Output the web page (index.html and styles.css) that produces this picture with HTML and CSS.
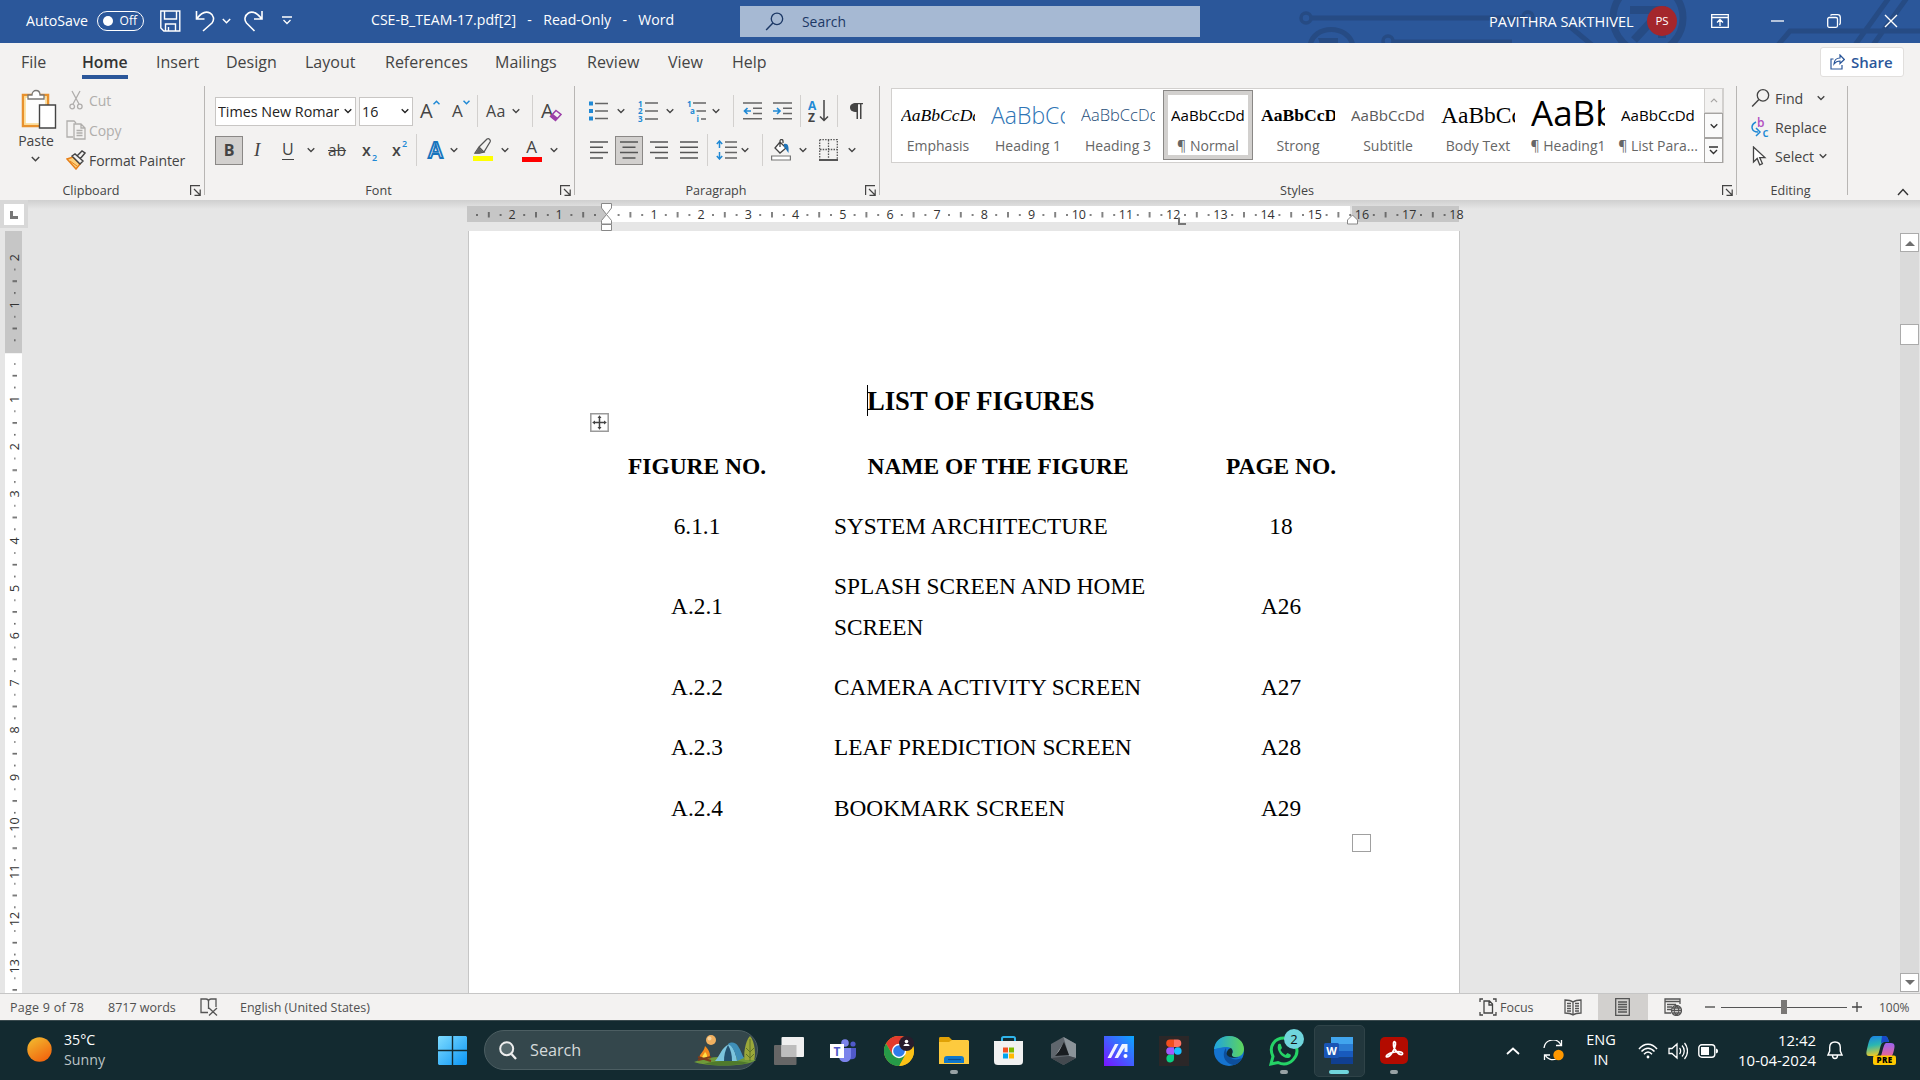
FILE: index.html
```html
<!DOCTYPE html>
<html lang="en">
<head>
<meta charset="utf-8">
<title>CSE-B_TEAM-17.pdf[2] - Read-Only - Word</title>
<link rel="stylesheet" href="styles.css">
</head>
<body>
<svg class="defs" width="0" height="0" aria-hidden="true">
  <symbol id="chev" viewBox="0 0 9 6"><path d="M.8 1l3.700 3.700L8.200 1" fill="none" stroke="currentColor" stroke-width="1.500"/></symbol>
  <symbol id="launch" viewBox="0 0 11 11"><path d="M.6 10V.6H10M4 4l6 6M10.200 4.500v5.800H4.500" fill="none" stroke="currentColor" stroke-width="1.200"/></symbol>
  <symbol id="lens" viewBox="0 0 20 20"><circle cx="12.600" cy="7.200" r="6" fill="none" stroke="currentColor" stroke-width="1.400"/><path d="M8.300 11.600L1.200 19" stroke="currentColor" stroke-width="1.500"/></symbol>
</svg>
<div class="window">

<header class="titlebar">
  <svg class="circuit" width="640" height="43" viewBox="0 0 640 43" fill="none" stroke="#264b84" stroke-width="5">
    <circle cx="26" cy="18" r="5" stroke-width="3.500"/><path d="M32 18h213"/><circle cx="248" cy="17" r="5" stroke-width="3.500"/>
    <path d="M30 46c3-22 39-22 43 0" stroke-width="5"/><path d="M38 38h20v6H40z" fill="#264b84" stroke="none"/>
    <circle cx="108" cy="41" r="5" stroke-width="3.500"/><path d="M114 42h118M288 25l24 20"/>
    <circle cx="368" cy="18" r="35" stroke-width="7"/><path d="M350 10h32v28M382 10l-28 30" stroke-width="8"/>
    <path d="M498 45l12-14h130M575 45l36-50M593 45l36-50"/>
  </svg>
  <span class="t14">AutoSave</span>
  <span class="toggle"><i></i><b>Off</b></span>
  <svg width="21" height="22" viewBox="0 0 21 22" fill="none" stroke="#fff" stroke-width="1.400"><path d="M.8 1h19v20h-16l-3-3zM4.500 1v8h12V1M5.500 21v-7h10v7M8.500 21v-4"/></svg>
  <svg width="20" height="22" viewBox="0 0 20 22" fill="none" stroke="#fff" stroke-width="1.600"><path d="M1.500 1v8h8M2 8.500C6 3 11 1 15 3c4 2 4.500 7 2 10l-9 8"/></svg>
  <svg width="9" height="6"><use href="#chev"/></svg>
  <svg width="20" height="22" viewBox="0 0 20 22" fill="none" stroke="#fff" stroke-width="1.600"><path d="M18 1v8h-8M17.500 8.500C13 3 8 1 4.500 3 .5 5.500 0 10 2.500 13l8 8"/></svg>
  <svg width="10" height="9" viewBox="0 0 10 9" fill="none" stroke="#fff" stroke-width="1.300"><path d="M0 1h10M1.500 4L5 7.500 8.500 4"/></svg>
  <span class="doc-name">CSE-B_TEAM-17.pdf[2]&nbsp; -&nbsp; Read-Only&nbsp; -&nbsp; Word</span>
  <div class="search"><svg width="19" height="19"><use href="#lens"/></svg><span>Search</span></div>
  <span class="user">PAVITHRA SAKTHIVEL</span>
  <span class="avatar">PS</span>
  <svg width="18" height="14" viewBox="0 0 18 14" fill="none" stroke="#fff" stroke-width="1.300"><path d="M.7.700h16.600v12.600H.7zM.7 3.500h16.600M9 12V6M6 8.500l3-3 3 3"/></svg>
  <svg width="13" height="2" viewBox="0 0 13 2"><path d="M0 1h13" stroke="#fff" stroke-width="1.300"/></svg>
  <svg width="14" height="14" viewBox="0 0 14 14" fill="none" stroke="#fff" stroke-width="1.300"><rect x=".7" y="3.500" width="9.800" height="9.800" rx="1.500"/><path d="M3.500 1.500C4 .9 4.500.700 5 .700h5.500c1.800 0 2.800 1 2.800 2.800V9c0 .8-.4 1.200-1 1.700"/></svg>
  <svg width="14" height="14" viewBox="0 0 14 14"><path d="M1 1l12 12M13 1L1 13" stroke="#fff" stroke-width="1.400"/></svg>
</header>

<nav class="tabs">
  <span>File</span><span class="active">Home</span><span>Insert</span><span>Design</span><span>Layout</span><span>References</span><span>Mailings</span><span>Review</span><span>View</span><span>Help</span>
  <button class="share"><svg width="15" height="16" viewBox="0 0 15 16" fill="none" stroke="#2b579a" stroke-width="1.200"><path d="M3.500 5H1v10h11v-4M4 10c.3-4 2.500-6 6-6V1l4.300 4.500L10 9.500V7C7 7 5.500 8 4 10z"/></svg><b>Share</b></button>
</nav>

<section class="ribbon">
  <div class="group clipboard">
    <div class="clip-body">
      <div class="paste">
        <svg width="36" height="40" viewBox="0 0 36 40"><path d="M2 6h25v31H2z" fill="#fdfdfd" stroke="#e8912d" stroke-width="2.500"/><path d="M4 8h21v27H4z" fill="none" stroke="#fbd98a" stroke-width="1.500"/><path d="M7 10V6h4c0-6 8-6 8 0h4v4z" fill="#fff" stroke="#797774" stroke-width="1.300"/><path d="M18.500 16h16v23h-16z" fill="#fff" stroke="#444" stroke-width="1.400"/></svg>
        <span>Paste</span>
        <svg width="9" height="6"><use href="#chev"/></svg>
      </div>
      <div class="clip-list">
        <div class="dim"><svg width="14" height="20" viewBox="0 0 14 20" fill="none" stroke="#b0aeac" stroke-width="1.300"><path d="M3 1l7 13M11 1L4 14"/><circle cx="3.200" cy="16.500" r="2.300"/><circle cx="10.800" cy="16.500" r="2.300"/></svg><span>Cut</span></div>
        <div class="dim"><svg width="20" height="20" viewBox="0 0 20 20" fill="none" stroke="#b0aeac" stroke-width="1.300"><path d="M7 17H1V1h7l2 2M8 4h7l4 4v11H8zM15 4v4h4M10.500 10.500h6M10.500 13h6M10.500 15.500h6"/></svg><span>Copy</span></div>
        <div><svg width="20" height="20" viewBox="0 0 20 20"><path d="M1 9l6-2 7 7-4 5z" fill="#fbd07f" stroke="#e8801a" stroke-width="1.500"/><path d="M4 11l7 5" stroke="#e8801a"/><path d="M6 6l3-2 8 7-3 3zM11 6l5-5 3 2-5 6" fill="#f3f2f1" stroke="#444" stroke-width="1.400"/></svg><span>Format Painter</span></div>
      </div>
    </div>
    <div class="glabel"><span>Clipboard</span><svg width="11" height="11"><use href="#launch"/></svg></div>
  </div>

  <div class="group font">
    <div class="row f1">
      <div class="combo"><span>Times New Roman</span><svg width="8" height="6"><use href="#chev"/></svg></div>
      <div class="combo size"><span>16</span><svg width="8" height="6"><use href="#chev"/></svg></div>
      <span class="glyph g-a1">A<svg width="7" height="5" viewBox="0 0 7 5"><path d="M.5 4.300l3-3 3 3" fill="none" stroke="#2089d5" stroke-width="1.500"/></svg></span>
      <span class="glyph g-a2">A<svg width="7" height="5" viewBox="0 0 7 5"><path d="M.5.700l3 3 3-3" fill="none" stroke="#2089d5" stroke-width="1.500"/></svg></span>
      <i class="sep"></i>
      <span class="glyph g-aa">Aa</span>
      <svg width="8" height="6"><use href="#chev"/></svg>
      <i class="sep"></i>
      <span class="glyph g-a1">A<svg class="eraser" width="13" height="13" viewBox="0 0 13 13"><path d="M7 1.500l5 4-5.500 6-5-4z" fill="#f3f2f1" stroke="#9b3fa8" stroke-width="1.500"/><path d="M4 5l5 4-2.500 2.500-5-4z" fill="#9b3fa8"/></svg></span>
    </div>
    <div class="row f2">
      <span class="pressed bold">B</span>
      <span class="glyph ital">I</span>
      <span class="glyph und">U</span>
      <svg width="8" height="6"><use href="#chev"/></svg>
      <span class="glyph strike">ab</span>
      <span class="glyph script">x<sub>2</sub></span>
      <span class="glyph script">x<sup>2</sup></span>
      <i class="sep"></i>
      <svg width="21" height="24" viewBox="0 0 21 24"><text class="fx" x="10.500" y="20">A</text></svg>
      <svg width="8" height="6"><use href="#chev"/></svg>
      <svg width="21" height="24" viewBox="0 0 21 24"><path d="M0 18h20v5H0z" fill="#ff0"/><path d="M2 15l4-6 5 5-5 1zM6 9l8-8c2-1 4 1 3 3l-6 10" fill="#f3f2f1" stroke="#555" stroke-width="1.300"/><path d="M2 15.500l4-6 4 4-3 2z" fill="#666"/></svg>
      <svg width="8" height="6"><use href="#chev"/></svg>
      <span class="fontcolor">A</span>
      <svg width="8" height="6"><use href="#chev"/></svg>
    </div>
    <div class="glabel"><span>Font</span><svg width="11" height="11"><use href="#launch"/></svg></div>
  </div>

  <div class="group para">
    <div class="row p1">
      <svg width="19" height="20" viewBox="0 0 19 20"><path d="M0 .5h4v4H0zM0 8h4v4H0zM0 15.500h4v4H0z" fill="#2089d5"/><path d="M6 2.500h13M6 10h13M6 17.500h13" stroke="#666" stroke-width="1.500"/></svg>
      <svg width="8" height="6"><use href="#chev"/></svg>
      <svg width="20" height="22" viewBox="0 0 20 22"><path d="M7 3h13M7 11h13M7 19h13" stroke="#666" stroke-width="1.500"/><g class="num"><text x="0" y="6.500">1</text><text x="0" y="14.300">2</text><text x="0" y="22">3</text></g></svg>
      <svg width="8" height="6"><use href="#chev"/></svg>
      <svg width="19" height="22" viewBox="0 0 19 22"><path d="M6 3h13M9.500 11H19M14 19h5" stroke="#666" stroke-width="1.500"/><g class="num"><text x="0" y="6.500">1</text><text x="3" y="14">a</text><text x="9.500" y="22">i</text></g></svg>
      <svg width="8" height="6"><use href="#chev"/></svg>
      <i class="sep"></i>
      <svg width="19" height="18" viewBox="0 0 19 18"><path d="M0 1h19M10 6.300h9M10 11.500h9M0 16.800h19" stroke="#666" stroke-width="1.500"/><path d="M8 9H1.500M4.500 6l-3 3 3 3" fill="none" stroke="#2089d5" stroke-width="1.700"/></svg>
      <svg width="19" height="18" viewBox="0 0 19 18"><path d="M0 1h19M10 6.300h9M10 11.500h9M0 16.800h19" stroke="#666" stroke-width="1.500"/><path d="M0 9h7M4 6l3 3-3 3" fill="none" stroke="#2089d5" stroke-width="1.700"/></svg>
      <i class="sep"></i>
      <svg width="22" height="24" viewBox="0 0 22 24"><text class="az" x="0" y="10.500" fill="#2089d5">A</text><text class="az" x="0" y="22.500" fill="#444">Z</text><path d="M16 1v21M12 17.500l4 4 4-4" fill="none" stroke="#444" stroke-width="1.500"/></svg>
      <i class="sep"></i>
      <svg width="13" height="16" viewBox="0 0 13 16"><path d="M6 0h7v1.200h-1.500V16H10V1.200H8V16H6.500V9C2.500 9 0 7.500 0 4.500S2.500 0 6 0z" fill="#444"/></svg>
    </div>
    <div class="row p2">
      <svg class="lines" width="18" height="18" viewBox="0 0 18 18"><path d="M0 1h18M0 6.300h13M0 11.600h18M0 17h13"/></svg>
      <span class="pressed"><svg class="lines" width="18" height="18" viewBox="0 0 18 18"><path d="M0 1h18M2.500 6.300h13M0 11.600h18M2.500 17h13"/></svg></span>
      <svg class="lines" width="18" height="18" viewBox="0 0 18 18"><path d="M0 1h18M5 6.300h13M0 11.600h18M5 17h13"/></svg>
      <svg class="lines" width="18" height="18" viewBox="0 0 18 18"><path d="M0 1h18M0 6.300h18M0 11.600h18M0 17h18"/></svg>
      <i class="sep"></i>
      <svg width="21" height="20" viewBox="0 0 21 20"><path d="M9 2h12M9 7.300h12M9 12.600h12M9 18h12" stroke="#666" stroke-width="1.500"/><path d="M3.500 1v7M.8 4l2.700-3 2.700 3M3.500 12v7M.8 16l2.700 3 2.700-3" fill="none" stroke="#2089d5" stroke-width="1.500"/></svg>
      <svg width="8" height="6"><use href="#chev"/></svg>
      <i class="sep"></i>
      <svg width="20" height="22" viewBox="0 0 20 22"><path d="M.6 17h18.800v4H.6z" fill="#fff" stroke="#777" stroke-width="1.200"/><path d="M9 3l6 6-6 5-5-5zM9 8V2c0-2 3-2 3 0v2" fill="#fff" stroke="#444" stroke-width="1.300"/><path d="M13 5c4-1 5 2 4.500 9C15.500 12 15 9 13 8z" fill="#2074b8"/></svg>
      <svg width="8" height="6"><use href="#chev"/></svg>
      <svg width="19" height="22" viewBox="0 0 19 22"><path d="M.7.700h17.600v19M.7.700v19M9.500 1v19M1 10.500h17" fill="none" stroke="#555" stroke-width="1.300" stroke-dasharray="1.500 1.200"/><path d="M0 21h19" stroke="#444" stroke-width="1.800"/></svg>
      <svg width="8" height="6"><use href="#chev"/></svg>
    </div>
    <div class="glabel"><span>Paragraph</span><svg width="11" height="11"><use href="#launch"/></svg></div>
  </div>

  <div class="group styles">
    <div class="gallery">
      <div class="style"><p class="s-emph">AaBbCcDd</p><span>Emphasis</span></div>
      <div class="style"><p class="s-h1">AaBbCc</p><span>Heading 1</span></div>
      <div class="style"><p class="s-h3">AaBbCcDd</p><span>Heading 3</span></div>
      <div class="style selected"><p>AaBbCcDd</p><span>¶ Normal</span></div>
      <div class="style"><p class="s-strong">AaBbCcDd</p><span>Strong</span></div>
      <div class="style"><p class="s-sub">AaBbCcDd</p><span>Subtitle</span></div>
      <div class="style"><p class="s-body">AaBbCc</p><span>Body Text</span></div>
      <div class="style"><p class="s-big">AaBb</p><span>¶ Heading1</span></div>
      <div class="style"><p>AaBbCcDd</p><span>¶ List Para...</span></div>
      <div class="gscroll">
        <i class="off"><svg width="8" height="5" viewBox="0 0 9 6"><path d="M.8 5l3.700-3.700L8.200 5" fill="none" stroke="currentColor" stroke-width="1.400"/></svg></i>
        <i><svg width="8" height="6"><use href="#chev"/></svg></i>
        <i><svg width="9" height="9" viewBox="0 0 9 9"><path d="M0 1h9M1 4l3.500 3.500L8 4" fill="none" stroke="#333" stroke-width="1.400"/></svg></i>
      </div>
    </div>
    <div class="glabel"><span>Styles</span><svg width="11" height="11"><use href="#launch"/></svg></div>
  </div>

  <div class="group editing">
    <div class="edit-list">
      <div><svg width="19" height="20"><use href="#lens"/></svg><span>Find</span><svg class="c1" width="8" height="6"><use href="#chev"/></svg></div>
      <div><svg width="19" height="22" viewBox="0 0 19 22"><text x="6" y="10.500" class="rb" fill="#b14fc0">b</text><text x="11.500" y="21" class="rb" fill="#2089d5">c</text><path d="M5 6c-6 3-5 10 2 10M5 12l4 4-4 4" fill="none" stroke="#2089d5" stroke-width="1.500"/></svg><span>Replace</span></div>
      <div><svg width="17" height="20" viewBox="0 0 17 20"><path d="M2.500 1v15l3.700-3.500 2.500 6.300 2.700-1.200-2.700-6h5.200z" fill="#fff" stroke="#444" stroke-width="1.300"/></svg><span>Select</span><svg class="c2" width="8" height="6"><use href="#chev"/></svg></div>
    </div>
    <div class="glabel last"><span>Editing</span></div>
  </div>
  <div class="collapse"><svg width="12" height="8" viewBox="0 0 12 8"><path d="M1 7l5-5.500L11 7" fill="none" stroke="#333" stroke-width="1.400"/></svg></div>
</section>

<main class="workspace">
  <div class="left">
    <div class="tabsel"><i></i></div>
    <svg class="vruler" width="17" height="762" viewBox="0 231 17 762">
      <defs><pattern id="vt" width="17" height="47.250" y="352.200" patternUnits="userSpaceOnUse"><path d="M9 11.800h1.600M7.500 23.600h4.500M9 35.400h1.600" stroke="#333" stroke-width="1.200"/></pattern></defs>
      <path d="M0 231h17v122H0z" fill="#c6c6c6"/><path d="M0 353.500h17V993H0z" fill="#fff"/><path d="M0 268h17v725H0z" fill="url(#vt)"/>
      <g class="rt">
        <text transform="translate(14 257.700)rotate(-90)">2</text><text transform="translate(14 305)rotate(-90)">1</text>
        <text transform="translate(14 399.300)rotate(-90)">1</text><text transform="translate(14 446.600)rotate(-90)">2</text><text transform="translate(14 493.800)rotate(-90)">3</text><text transform="translate(14 541)rotate(-90)">4</text><text transform="translate(14 588.300)rotate(-90)">5</text><text transform="translate(14 635.600)rotate(-90)">6</text><text transform="translate(14 682.800)rotate(-90)">7</text><text transform="translate(14 730)rotate(-90)">8</text><text transform="translate(14 777.300)rotate(-90)">9</text><text transform="translate(14 824.600)rotate(-90)">10</text><text transform="translate(14 871.800)rotate(-90)">11</text><text transform="translate(14 919)rotate(-90)">12</text><text transform="translate(14 966.300)rotate(-90)">13</text>
      </g>
    </svg>
  </div>
  <div class="center">
    <svg class="hruler" width="1006" height="31" viewBox="467 200 1006 31">
      <defs><pattern id="ht" width="47.200" height="31" x="606.800" y="200" patternUnits="userSpaceOnUse"><path d="M11.800 14v2M23.600 12v5.500M35.400 14v2" stroke="#333" stroke-width="1.200"/></pattern></defs>
      <path d="M467 206h139v16H467zM1352 206h107v16h-107z" fill="#c6c6c6"/><path d="M606 206h744v16H606z" fill="#fff"/><path d="M473 200h980v31H473z" fill="url(#ht)"/>
      <g class="rt">
        <text x="512" y="219">2</text><text x="559" y="219">1</text><text x="654" y="219">1</text><text x="701.200" y="219">2</text><text x="748.400" y="219">3</text><text x="795.600" y="219">4</text><text x="842.800" y="219">5</text><text x="890" y="219">6</text><text x="937.200" y="219">7</text><text x="984.400" y="219">8</text><text x="1031.600" y="219">9</text><text x="1078.800" y="219">10</text><text x="1126" y="219">11</text><text x="1173.200" y="219">12</text><text x="1220.400" y="219">13</text><text x="1267.600" y="219">14</text><text x="1314.800" y="219">15</text><text x="1362" y="219">16</text><text x="1409.200" y="219">17</text><text x="1456.400" y="219">18</text>
      </g>
      <path d="M601.500 203.500h10v4.500l-5 6.500-5-6.500zM601.500 224v-3.500l5-6 5 6v3.500zM601.500 224.500h10v6h-10z" fill="#fff" stroke="#888"/>
      <path d="M1347.500 224v-4l5-5 5 5v4z" fill="#fff" stroke="#888"/>
      <path d="M1179 217.500v6.500h7" fill="none" stroke="#777" stroke-width="2"/>
    </svg>
    <article class="page">
      <h1>LIST OF FIGURES<i class="caret"></i></h1>
      <svg class="handle" width="19" height="19" viewBox="0 0 19 19"><path d="M.8.800h17.400v17.400H.8z" fill="#fff" stroke="#9a9a9a" stroke-width="1.500"/><path d="M9.500 4v11M4 9.500h11" stroke="#444" stroke-width="1.500"/><path d="M9.500 2.200l2 2.800h-4zM9.500 16.800l2-2.800h-4zM2.200 9.500l2.800-2v4zM16.800 9.500l-2.800-2v4z" fill="#444"/></svg>
      <div class="figures">
        <b>FIGURE NO.</b><b class="hd">NAME OF THE FIGURE</b><b>PAGE NO.</b>
        <span>6.1.1</span><span class="nm">SYSTEM ARCHITECTURE</span><span>18</span>
        <span>A.2.1</span><span class="nm">SPLASH SCREEN AND HOME<br>SCREEN</span><span>A26</span>
        <span>A.2.2</span><span class="nm">CAMERA ACTIVITY SCREEN</span><span>A27</span>
        <span>A.2.3</span><span class="nm">LEAF PREDICTION SCREEN</span><span>A28</span>
        <span>A.2.4</span><span class="nm">BOOKMARK SCREEN</span><span>A29</span>
      </div>
      <i class="resize"></i>
    </article>
  </div>
  <div class="scroll">
    <i class="btn"><svg width="10" height="6"><path d="M0 6l5-5 5 5z" fill="#6e6e6e"/></svg></i>
    <i class="thumb"></i>
    <i class="btn down"><svg width="10" height="6"><path d="M0 0l5 5 5-5z" fill="#6e6e6e"/></svg></i>
  </div>
</main>

<footer class="status">
  <span class="pg">Page 9 of 78</span><span>8717 words</span>
  <svg width="18" height="18" viewBox="0 0 18 18" fill="none" stroke="#555" stroke-width="1.300"><path d="M8 14.500H1V1h5c2 0 2.500 1 2.500 2.500C8.500 2 9.500 1 11 1h5v8M8.500 3v8M9 10l8 7.500M17 10l-8 7.500"/></svg>
  <span>English (United States)</span>
  <svg width="18" height="18" viewBox="0 0 18 18" fill="none" stroke="#444" stroke-width="1.300"><path d="M1 4V1h3M14 1h3v3M17 14v3h-3M4 17H1v-3M5 3h5.500l3 3v9H5zM10 3v4h4"/></svg>
  <span>Focus</span>
  <svg width="18" height="17" viewBox="0 0 18 17" fill="none" stroke="#555" stroke-width="1.300"><path d="M9 3v13M9 3C7 1.500 4 1 1 1v13c3 0 6 .5 8 2 2-1.500 5-2 8-2V1c-3 0-6 .5-8 2M3 4.500h4M3 7h4M3 9.500h4M3 12h4M11 4.500h4M11 7h4M11 9.500h4M11 12h4"/></svg>
  <span class="view-on"><svg width="15" height="18" viewBox="0 0 15 18" fill="none" stroke="#555" stroke-width="1.300"><path d="M.7.700h13.600v16.600H.7zM3 4h9M3 6.500h9M3 9h9M3 11.500h9M3 14h9"/></svg></span>
  <svg width="18" height="18" viewBox="0 0 18 18" fill="none" stroke="#555" stroke-width="1.300"><path d="M16 6V1H1v14h6M1 3.500h15M3 6.500h9M3 9h5M3 11.500h4"/><circle cx="12.500" cy="12.500" r="5" fill="#f3f2f1"/><path d="M7.500 12.500h10M12.500 7.500c-3 3-3 7 0 10M12.500 7.500c3 3 3 7 0 10M8.500 10h8M8.500 15h8"/></svg>
  <svg width="10" height="2"><path d="M0 1h10" stroke="#444" stroke-width="1.300"/></svg>
  <svg width="126" height="14"><path d="M0 7.500h126" stroke="#555"/><path d="M60 0h6v14h-6z" fill="#797775"/></svg>
  <svg width="10" height="10"><path d="M0 5h10M5 0v10" stroke="#444" stroke-width="1.300"/></svg>
  <span class="pct">100%</span>
</footer>

<footer class="taskbar">
  <svg class="sun" width="25" height="25" viewBox="0 0 25 25"><defs><linearGradient id="sg" x1=".2" y1="0" x2=".8" y2="1"><stop stop-color="#f2b82e"/><stop offset="1" stop-color="#f2600c"/></linearGradient></defs><circle cx="12.500" cy="12.500" r="12.200" fill="url(#sg)"/></svg>
  <div class="weather"><span>35°C</span><span>Sunny</span></div>
  <svg width="29" height="29" viewBox="0 0 29 29"><defs><linearGradient id="wg" x2="1" y2="1" gradientUnits="objectBoundingBox"><stop stop-color="#7fdcff"/><stop offset="1" stop-color="#0a95f5"/></linearGradient></defs><path d="M1 0h12.800v13.800H0V1zM15.200 0H28l1 1v12.800H15.200zM0 15.200h13.800V29H1l-1-1zM15.200 15.200H29V28l-1 1H15.200z" fill="url(#wg)"/></svg>
  <div class="tsearch">
    <svg width="18" height="19" viewBox="0 0 18 19"><circle cx="7.700" cy="7.700" r="6.500" fill="#55686c" stroke="#eee" stroke-width="2"/><path d="M12.500 13l4.500 5" stroke="#eee" stroke-width="2.300"/></svg>
    <span>Search</span>
    <svg width="62" height="32" viewBox="0 0 62 32">
      <path d="M0 28c12-6 46-8 62-2-8 7-50 7-62 2z" fill="#6f9a3a"/><path d="M10 30c12-4 34-4 45-1-12 3-35 3-45 1z" fill="#4f7a2c"/>
      <circle cx="17" cy="6" r="5" fill="#f0b060"/><circle cx="15.500" cy="4.500" r="2" fill="#f9d49b"/>
      <path d="M21 27c5-5 6-13 14-17 4 1 7 10 8 17z" fill="#7cc4dd"/><path d="M34 11c-3 5-4 11-4 16h8c0-6-1-11-4-16z" fill="#24506e"/><path d="M34 10c4-3 8-1 10 2 3 4 4 9 6 12l-7 3c-1-7-4-15-9-17z" fill="#3f8fb8"/>
      <path d="M11 12c5 5 6 9 4 13H6c-2-5 4-6 5-13z" fill="#f28a1c"/><path d="M11 18c3 3 2 6 1 7H9c-2-3 1-4 2-7z" fill="#ffe04a"/><path d="M4 26l13-3M4 23l13 4" stroke="#7b3c1c" stroke-width="2"/>
      <path d="M56 2c5 5 6 20 4 24h-9c-2-4 0-19 5-24z" fill="#9aa73a"/><path d="M56 5v22M52 14l4 4 4-4M52 20l4 4 4-4" stroke="#5f7428" fill="none"/>
    </svg>
  </div>
  <div class="apps">
    <i><svg width="30" height="28" viewBox="0 0 30 28"><rect y="8" width="22.500" height="20" rx="1" fill="#666"/><rect x="7.500" width="22.500" height="20" rx="1" fill="#f0f0f0"/><path d="M7.500 8h15v12h-15z" fill="#bdbdbd"/></svg></i>
    <i><svg width="27" height="24" viewBox="0 0 27 24"><circle cx="15" cy="4" r="3.800" fill="#7b83eb"/><circle cx="23" cy="5" r="2.600" fill="#5059c9"/><path d="M19 9h7v7c0 4-3 5-7 4z" fill="#5059c9"/><path d="M9 9h12v8c0 4-2.500 6-6 6s-6-2-6-6z" fill="#7b83eb"/><rect y="5" width="14" height="14" fill="#fff"/><text class="tl" x="7" y="16.500" fill="#5059c9">T</text></svg></i>
    <i><svg width="30" height="30" viewBox="0 0 30 30"><circle cx="15" cy="15" r="15" fill="#fbc116"/><path d="M2 7.500A15 15 0 0 1 28 7.500H15L8.500 18.800z" fill="#e33b2e"/><path d="M2 7.500l6.500 11.300L15 22.500 15.500 30A15 15 0 0 1 2 7.500z" fill="#269a48"/><path d="M8.500 18.800L15 22l6.500-3.300L15.200 30z" fill="#269a48"/><path d="M21.500 18.800L15.200 30A15 15 0 0 0 28 7.500H15z" fill="#fbc116"/><circle cx="15" cy="15" r="7.200" fill="#fff"/><circle cx="15" cy="15" r="5.800" fill="#2f7bea"/><circle cx="22.500" cy="7.500" r="7.500" fill="#291d2c"/><circle cx="22.500" cy="5.500" r="1.800" fill="#fff"/><path d="M19.500 10c0-3 6-3 6 0z" fill="#fff"/></svg></i>
    <i class="run"><svg width="30" height="27" viewBox="0 0 30 27"><path d="M0 1.500C0 .5.500 0 1.500 0H10l3 3v4H0z" fill="#e0a106"/><path d="M0 5h10l3-2h16l1 1v23H0z" fill="#fdca3e"/><path d="M5 26v-4c0-2 1-3 3-3h14c2 0 3 1 3 3v4z" fill="#0f78cc"/><path d="M9 22.500h13" stroke="#0a4f94" stroke-width="1.200"/></svg></i>
    <i><svg width="29" height="29" viewBox="0 0 29 29"><path d="M8 5V2.500C8 1.500 8.500 1 9.500 1h10c1 0 1.500.5 1.500 1.500V5" fill="none" stroke="#2fb4ea" stroke-width="2"/><path d="M0 5h29v20c0 3-1.500 4-4 4H4c-2.500 0-4-1-4-4z" fill="#f1f1f1"/><path d="M9 11.500h5v5H9z" fill="#f25022"/><path d="M15 11.500h5v5h-5z" fill="#7fba00"/><path d="M9 17.500h5v5H9z" fill="#00a4ef"/><path d="M15 17.500h5v5h-5z" fill="#ffb900"/></svg></i>
    <i><svg width="27" height="28" viewBox="0 0 27 28"><path d="M13.500 0L26 7v14l-12.500 7L1 21V7z" fill="#5f666d"/><path d="M13.500 0L26 7v14l-7-2z" fill="#8b9399"/><path d="M1 21l18-2 7 2-12.500 7z" fill="#43494f"/><path d="M14 5l5 13-14 1z" fill="#191d21"/><path d="M5 19L14 5l-5 9z" fill="#c8cdd1"/></svg></i>
    <i><svg width="30" height="30" viewBox="0 0 30 30"><defs><linearGradient id="mg" x1="0" y1="1" x2="1" y2="0"><stop stop-color="#7a12ff"/><stop offset="1" stop-color="#0aa8ff"/></linearGradient></defs><path d="M0 0h30v30H0z" fill="url(#mg)"/><path d="M3.500 22L11 8h3.500L7 22zM10.500 22L18 8h5.500v8h-3v-4.500L14 22z" fill="#fff" opacity=".92"/><circle cx="21.500" cy="20" r="2" fill="#fff"/></svg></i>
    <i><svg width="30" height="30" viewBox="0 0 30 30"><path d="M0 0h30v30H0z" fill="#2b2728"/><path d="M15 3.500h-4a3.800 3.800 0 0 0 0 7.600h4z" fill="#f24e1e"/><path d="M15 3.500h3.500a3.800 3.800 0 0 1 0 7.600H15z" fill="#ff7262"/><path d="M15 11.200h-4a3.800 3.800 0 0 0 0 7.600h4z" fill="#a259ff"/><circle cx="18.800" cy="15" r="3.800" fill="#1abcfe"/><path d="M15 18.800h-4a3.800 3.800 0 1 0 4 3.800z" fill="#0acf83"/></svg></i>
    <i><svg width="30" height="30" viewBox="0 0 30 30"><defs><linearGradient id="eg"><stop stop-color="#1fa3e0"/><stop offset="1" stop-color="#5fd65a"/></linearGradient></defs><circle cx="15" cy="15" r="15" fill="#1573cf"/><path d="M0 13C1 5 7 0 15 0c9 0 15 6 15 13 0 5-4 8-8 8-4 0-5-1.500-4-3 2-3 0-7-5-7-6 0-11 2-13 2z" fill="url(#eg)"/><path d="M12 12c-5 7-1 16 8 17 4-1 7-4 8-7-9 4-16-1-16-10z" fill="#0d4f9c"/><path d="M18 18c1-2 1-4-1-6-3 1-5 4-4 7 2 3 8 4 14 2-3 1-10 1-9-3z" fill="#132a30"/></svg></i>
    <i class="run"><svg width="30" height="30" viewBox="0 0 30 30"><path d="M2 28l2-7.500C-1 10 6 2 15 2s13 7 13 13-6 13-13 13c-2 0-4-.5-6-1.500z" fill="none" stroke="#25d366" stroke-width="3"/><path d="M9 9c1-2 3-1 3 0l1 3-1.500 2c1 2 3 4 5 5l2-2 3 1.500c1 1 0 3-2 3.500C14 23 7 15 9 9z" fill="#25d366"/></svg><b class="badge">2</b></i>
    <i class="run current"><svg width="29" height="27" viewBox="0 0 29 27"><path d="M7 0h22v7H7z" fill="#41a5ee"/><path d="M7 7h22v7H7z" fill="#2b7cd3"/><path d="M7 14h22v6.500H7z" fill="#185abd"/><path d="M7 20.500h22V27H7z" fill="#103f91"/><rect y="6" width="15" height="15" rx="1.500" fill="#1a55b5"/><text class="wl" x="7.500" y="17.500" fill="#fff">W</text></svg></i>
    <i class="run"><svg width="28" height="27" viewBox="0 0 28 27"><rect width="28" height="27" rx="5" fill="#b30b00"/><path d="M7 20c-2 0 0-4 8-5 6-1 9 1 7 2.500-3 1-9-5-8.500-11 0-3 2.500-2 2 1C15 13 10 20 7 20z" fill="none" stroke="#fff" stroke-width="1.700"/></svg></i>
  </div>
  <div class="tray">
    <svg width="14" height="8" viewBox="0 0 14 8"><path d="M1 7l6-5.500L13 7" fill="none" stroke="#fff" stroke-width="1.800"/></svg>
    <svg width="21" height="21" viewBox="0 0 21 21"><path d="M1 8a9 9 0 0 1 17-3M18.500 0v5.500H13M13 19A9 9 0 0 1 2 15M1.500 20v-5H7" fill="none" stroke="#fff" stroke-width="1.300"/><circle cx="15.500" cy="15" r="5.200" fill="#ff9800"/></svg>
    <div class="lang"><span>ENG</span><span>IN</span></div>
    <svg width="20" height="16" viewBox="0 0 20 16" fill="none" stroke="#fff" stroke-width="1.500"><path d="M1 6c5-6.500 13-6.500 18 0M3.500 8.500c4-4.500 9-4.500 13 0M6 11.300c2.500-3 5.500-3 8 0"/><circle cx="10" cy="14" r="1.400" fill="#fff" stroke="none"/></svg>
    <svg width="20" height="18" viewBox="0 0 20 18" fill="none" stroke="#fff" stroke-width="1.300"><path d="M1 6.500h3l5-4.500v14l-5-4.500H1zM11.500 6c1.500 1.500 1.500 4.500 0 6M14 3.500c3 3 3 8 0 11M16.500 1c4 4.500 4 11.500 0 16"/></svg>
    <svg width="20" height="14" viewBox="0 0 20 14"><rect x=".8" y=".8" width="16" height="12.400" rx="3" fill="none" stroke="#fff" stroke-width="1.400"/><path d="M3 3h8v8H3z" fill="#fff"/><path d="M18 4.500c1.500.5 2 1 2 2.500s-.5 2-2 2.500z" fill="#fff"/></svg>
    <div class="clock"><span>12:42</span><span>10-04-2024</span></div>
    <svg width="16" height="19" viewBox="0 0 16 19"><path d="M8 1C4.500 1 2.700 3.500 2.700 6.500V10L1 14h14l-1.700-4V6.500C13.300 3.500 11.500 1 8 1zM5.500 14.500c0 4 5 4 5 0" fill="none" stroke="#fff" stroke-width="1.400"/></svg>
    <svg width="30" height="29" viewBox="0 0 30 29"><defs><linearGradient id="c1" x2=".2" y2="1"><stop stop-color="#1a7fe8"/><stop offset=".5" stop-color="#2bb7b0"/><stop offset="1" stop-color="#e8c92c"/></linearGradient><linearGradient id="c2" x2="0" y2="1"><stop stop-color="#9a63f0"/><stop offset="1" stop-color="#f5668a"/></linearGradient></defs><path d="M8 0h11c2 0 3 2 4 6h-5c-2 0-3 2-4 6-1 5-2 8-5 8H3c-3 0-3-3-2-7C3 5 4 0 8 0z" fill="url(#c1)"/><path d="M16 0h3c2 0 3 2 4 6h-5l-3 1z" fill="#1748c8"/><path d="M20 7h5c4 0 4 3 3 7-1 4-2 8-6 8h-8c2-2 3-14 6-15z" fill="url(#c2)"/><rect x="7" y="19.500" width="23" height="9.500" rx="2" fill="#ffc800"/><text class="pre" x="18.500" y="27.200">PRE</text></svg>
  </div>
</footer>
</div>
</body>
</html>
```
FILE: styles.css
```css
* { box-sizing: border-box; }
body { margin: 0; font-family: "Open Sans", "Noto Sans", sans-serif; color: #444; overflow: hidden; }
svg { display: block; flex: none; }
i { font-style: normal; }
.defs { position: absolute; }
.window { width: 1920px; height: 1080px; display: grid; grid-template-rows: 43px 41px 116px 794px 26px 60px; background: #e6e6e6; white-space: nowrap; }

/* Title bar */
.titlebar { position: relative; background: #2b579a; color: #fff; display: grid; align-items: center; justify-items: start; padding: 0 0 2px 26px;
  grid-template-columns: 71px 63px 35px 27px 22px 38px 88px 370px 749px 158px 64px 60px 56px 57px auto; font-size: 14.200px; }
.titlebar > :not(.circuit) { position: relative; }
.circuit { position: absolute; left: 1280px; top: 0; }
.toggle { width: 47px; height: 20px; border: 1px solid #fff; border-radius: 10px; display: flex; align-items: center; justify-content: space-between; padding: 0 6px 0 5px; font-size: 12px; }
.toggle i { width: 10px; height: 10px; border-radius: 50%; background: #fff; }
.toggle b { font-weight: 400; }
.doc-name { font-size: 14.100px; word-spacing: 2px; margin-top: -2px; margin-left: 1px; }
.search { width: 460px; height: 31px; background: #a6b9d3; color: #1c3865; display: flex; align-items: center; gap: 18px; padding-left: 25px; font-size: 13.900px; margin-top: 1px; }
.user { font-size: 14.550px; }
.avatar { width: 30px; height: 30px; border-radius: 50%; background: #a4262c; font-size: 11.500px; display: grid; place-items: center; }

/* Ribbon tabs */
.tabs { background: #f3f2f1; display: grid; grid-template-columns: 61px 74px 70px 79px 80px 110px 92px 81px 64px 1088px auto; padding-left: 21px; align-items: center; justify-items: start; font-size: 16px; padding-bottom: 3px; }
.tabs > span { line-height: 28px; }
.tabs .active { font-weight: 600; color: #333; border-bottom: 4px solid #2b579a; line-height: 26px; margin-top: 4px; height: 30px; font-size: 15.800px; }
.share { width: 84px; height: 30px; background: #fff; border: 1px solid #e1dfdd; border-radius: 3px; display: flex; align-items: center; gap: 6px; padding: 0 0 0 9px; color: #2b579a; font: 600 15px "Open Sans", sans-serif; }
.share b { font-weight: 600; }

/* Ribbon groups */
.ribbon { background: #f3f2f1; display: grid; grid-template-columns: 205px 370px 305px 857px 111px 72px; font-size: 14px; }
.group { position: relative; display: grid; grid-template-rows: 93px 23px; }
.group::after { content: ""; position: absolute; right: 0; top: 2px; height: 109px; border-right: 1px solid #b8b6b4; }
.glabel { display: grid; grid-template-columns: 1fr auto; align-items: center; font-size: 12.600px; text-align: center; padding: 0 4px 0 0; margin-top: 3px; }
.glabel span { padding-right: 8px; }
.glabel.last span { padding-right: 0; }
.sep { width: 1px; height: 32px; background: #d2d0ce; }
.row { display: grid; align-items: center; justify-items: start; }
.clip-body { display: grid; grid-template-columns: 69px auto; }
.paste { display: flex; flex-direction: column; align-items: center; padding: 5px 0 0 4px; }
.paste > :first-child { margin-left: 5px; }
.paste span { line-height: 19px; margin: 2px 1px 6px 0; font-size: 14px; }
.paste > :last-child { margin-right: 2px; }
.clip-list { display: grid; grid-template-rows: repeat(3, 30px); padding-top: 1px; letter-spacing: -.1px; }
.clip-list > div { display: grid; grid-template-columns: 20px auto; align-items: center; justify-content: start; gap: 3px; margin-left: -3px; }
.clip-list svg { justify-self: center; }
.dim { color: #b0aeac; }

.font, .para { grid-template-rows: 11px 29px 10px 29px 14px 23px; }
.font .f1 { grid-row: 2; grid-template-columns: 144px 61px 32px 25px 9px 26px 20px 9px auto; padding-left: 10px; }
.font .f2 { grid-row: 4; grid-template-columns: 39px 28px 25px 21px 34px 30px 24px 9px 25px 23px 28px 20.500px 28.500px auto; padding-left: 10px; }
.font .glabel, .para .glabel { grid-row: 6; }
.combo { width: 141px; height: 29px; background: #fff; border: 1px solid #c8c6c4; display: flex; justify-content: space-between; align-items: center; padding: 0 3px 0 2px; color: #222; font-size: 14.300px; }
.combo span { width: 121px; overflow: hidden; }
.combo.size { width: 54px; }
.combo.size span { width: auto; }
.glyph { position: relative; line-height: 24px; }
.g-a1 { font-size: 20px; }
.g-a2 { font-size: 17px; }
.g-aa { font-size: 16px; letter-spacing: .5px; }
.glyph svg { position: absolute; left: 100%; top: 1px; }
.glyph .eraser { left: 8px; top: 10px; }
.pressed { width: 28px; height: 29px; border: 1px solid #8a8886; background: #d2d0ce; display: grid; place-items: center; }
.bold { font-weight: 700; font-size: 16px; line-height: 22px; }
.ital { font: italic 19px "Liberation Serif", serif; }
.und { font-size: 16px; border-bottom: 1.500px solid #444; line-height: 19px; }
.strike { text-decoration: line-through; font-size: 15.500px; }
.script { font-size: 16px; font-weight: 600; }
.script sub, .script sup { position: absolute; font-size: 9px; color: #2089d5; line-height: 13px; left: 10px; }
.script sub { top: 13px; }
.script sup { top: -1px; }
.fx { font: 600 22px "Open Sans", sans-serif; text-anchor: middle; fill: #fff; stroke: #1874bd; stroke-width: 1.800px; }
.fontcolor { width: 20px; height: 24px; border-bottom: 5px solid #f00; font-size: 17px; line-height: 17px; text-align: center; }

.para .p1 { grid-row: 2; grid-template-columns: 28px 21px 28px 21px 25px 21px 10px 30px 27px 8px 29px 13px auto; padding-left: 14px; }
.para .p2 { grid-row: 4; grid-template-columns: 25px 35px 30px 27px 9px 25px 21px 9px 28px 20px 29px auto; padding-left: 15px; }
.lines { stroke: #555; stroke-width: 1.500px; }
.num text { font: 700 8px/8px "Open Sans", sans-serif; fill: #2089d5; }
.az { font: 700 12px "Open Sans", sans-serif; }

/* Style gallery */
.gallery { margin: 4px 0 0 11px; width: 833px; height: 75px; background: #fff; border: 1px solid #d2d0ce; display: grid; grid-template-columns: repeat(9, 90px) 19px; padding-left: 1px; }
.style { padding: 8px 8px 0; text-align: center; height: 70px; margin-top: 1px; }
.style p { margin: 0; height: 34px; line-height: 34px; overflow: hidden; text-align: left; color: #000; font-size: 15.100px; }
.style span { display: block; line-height: 20px; font-size: 14px; color: #666; margin: 4px -6px 0; }
.style.selected { border: 1px solid #8a8886; box-shadow: inset 0 0 0 4px #d2d0ce; padding: 7px 7px 0; }
.style .s-emph { font: italic 17.600px/34px "Liberation Serif", serif; }
.style .s-h1 { font-size: 23px; font-weight: 300; color: #2e74b5; }
.style .s-h3 { font-size: 16.500px; font-weight: 300; color: #1f4d78; }
.style .s-strong { font: bold 17.600px/34px "Liberation Serif", serif; }
.style .s-sub { color: #5a5a5a; }
.style .s-body { font: 23.500px/34px "Liberation Serif", serif; }
.style .s-big { font-size: 35px; line-height: 29px; }
.gscroll { display: grid; grid-template-rows: 25px 25px 25px; margin: -1px 0 0 1px; width: 19px; height: 75px; }
.gscroll i { border: 1px solid #a6a4a2; background: #fafafa; display: grid; place-items: center; color: #333; }
.gscroll .off { border-color: #d2d0ce; color: #a6a4a2; background: #f3f2f1; }
.edit-list { display: grid; grid-template-rows: 28px 30px 28px; }
.edit-list > div { display: grid; grid-template-columns: 23px 1fr auto; align-items: center; padding-left: 15px; font-size: 14.200px; }
.edit-list > div > :first-child { margin-left: -1px; }
.c1 { margin-right: 23px; }
.c2 { margin-right: 21px; }
.rb { font: 600 12px "Open Sans", sans-serif; }
.collapse { display: grid; justify-content: center; align-content: end; padding: 0 0 4px 38px; }

/* Document area */
.workspace { display: grid; grid-template-columns: 467px 1433px 20px; background: linear-gradient(#cfcfcf, #e6e6e6 9px); border-bottom: 1px solid #c6c6c6; height: 794px; overflow: hidden; }
.left { display: grid; grid-template-rows: 31px 1fr; }
.tabsel { width: 28px; height: 28px; border: 4px solid #d8d8d8; border-bottom-width: 3px; background: #fff; display: grid; place-items: center; }
.tabsel i { width: 8px; height: 8px; border: solid #777; border-width: 0 0 3px 3px; }
.vruler { margin-left: 5px; }
.rt text { font: 12.500px "Open Sans", sans-serif; text-anchor: middle; fill: #333; }
.page { position: relative; margin-left: 1px; width: 992px; height: 762px; background: #fff; border: solid #c6c6c6; border-width: 0 1px; font-family: "Liberation Serif", serif; color: #000; padding: 154px 0 0 100px; }
.page h1 { position: relative; margin: 0 0 36px 298px; width: 230px; font-size: 26.600px; line-height: 32px; }
.caret { position: absolute; left: 0; top: 0; width: 1px; height: 31px; background: #000; }
.handle { position: absolute; left: 121px; top: 182px; }
.resize { position: absolute; left: 883px; top: 603px; width: 19px; height: 18px; border: 1.500px solid #a0a0a0; background: #fff; }
.figures { display: grid; grid-template-columns: 256px 346px 220px; grid-template-rows: 60px 60.400px 101px 60.400px 60.400px 60.400px; font-size: 23.300px; line-height: 41px; text-align: center; align-items: center; margin-top: -17px; }
.figures b { font-size: 23.450px; }
.figures .nm { text-align: left; padding-left: 9px; }
.scroll { margin-top: 33px; width: 19px; height: 759px; background: #dadada; display: grid; grid-template-rows: 19px 72px 21px 1fr 19px; }
.scroll i { background: #fff; border: 1px solid #ababab; display: grid; place-items: center; }
.thumb { grid-row: 3; }
.down { grid-row: 5; }

/* Status bar */
.status { background: #f3f2f1; display: grid; grid-template-columns: 98px 92px 40px 1239px 21px 64px 34px 66px 41px 16px 131px 27px auto; align-items: center; justify-items: start; padding-left: 10px; font-size: 12.500px; color: #505050; }
.view-on { width: 50px; height: 26px; background: #d2d0ce; display: grid; place-items: center; padding-right: 2px; }
.pg { letter-spacing: .25px; }
.pct { font-size: 12px; }

/* Taskbar */
.taskbar { background: #132a30; border-top: 1px solid #3a4a4e; color: #fff; display: grid; grid-template-columns: 36px 374px 46px 277px 745px auto; align-items: center; justify-items: start; padding-left: 28px; font-size: 14.200px; }
.taskbar .sun { margin-top: -2px; margin-left: -1px; }
.weather, .lang, .clock { display: grid; line-height: 20px; margin-top: -2px; }
.weather :last-child { color: #bcc4c6; }
.tsearch { width: 274px; height: 40px; border: 1px solid #4c5e62; border-radius: 20px; background: #34474c; display: grid; grid-template-columns: 31px 164px auto; align-items: center; padding-left: 14px; font-size: 16.200px; color: #d5dadb; margin-top: -1px; }
.apps { display: grid; grid-template-columns: repeat(12, 55px); height: 59px; }
.apps > i { position: relative; display: grid; place-items: center; }
.run::after { content: ""; position: absolute; left: 24px; top: 49px; width: 8px; height: 4px; border-radius: 2px; background: #98a2a5; }
.current::before { content: ""; position: absolute; left: 3px; top: 4px; width: 49px; height: 50px; border: 1px solid #2f4348; border-radius: 5px; background: #22373d; }
.current svg { position: relative; }
.current::after { left: 18px; width: 20px; background: #70d5dc; }
.badge { position: absolute; left: 28px; top: 8px; width: 20px; height: 20px; border-radius: 50%; background: #70d5dc; color: #111; font: 13px/20px "Open Sans", sans-serif; text-align: center; }
.tl { font: 700 12px "Open Sans", sans-serif; text-anchor: middle; }
.wl { font: 700 11px "Open Sans", sans-serif; text-anchor: middle; }
.pre { font: 800 8px "Open Sans", sans-serif; text-anchor: middle; letter-spacing: .3px; }
.tray { display: grid; grid-template-columns: 37px 43px 52px 30px 30px 40px 89px 39px 30px; align-items: center; }
.lang { justify-items: center; width: 30px; font-size: 14.500px; }
.clock { display: grid; justify-items: end; font-size: 14.950px; width: 78px; }
```
